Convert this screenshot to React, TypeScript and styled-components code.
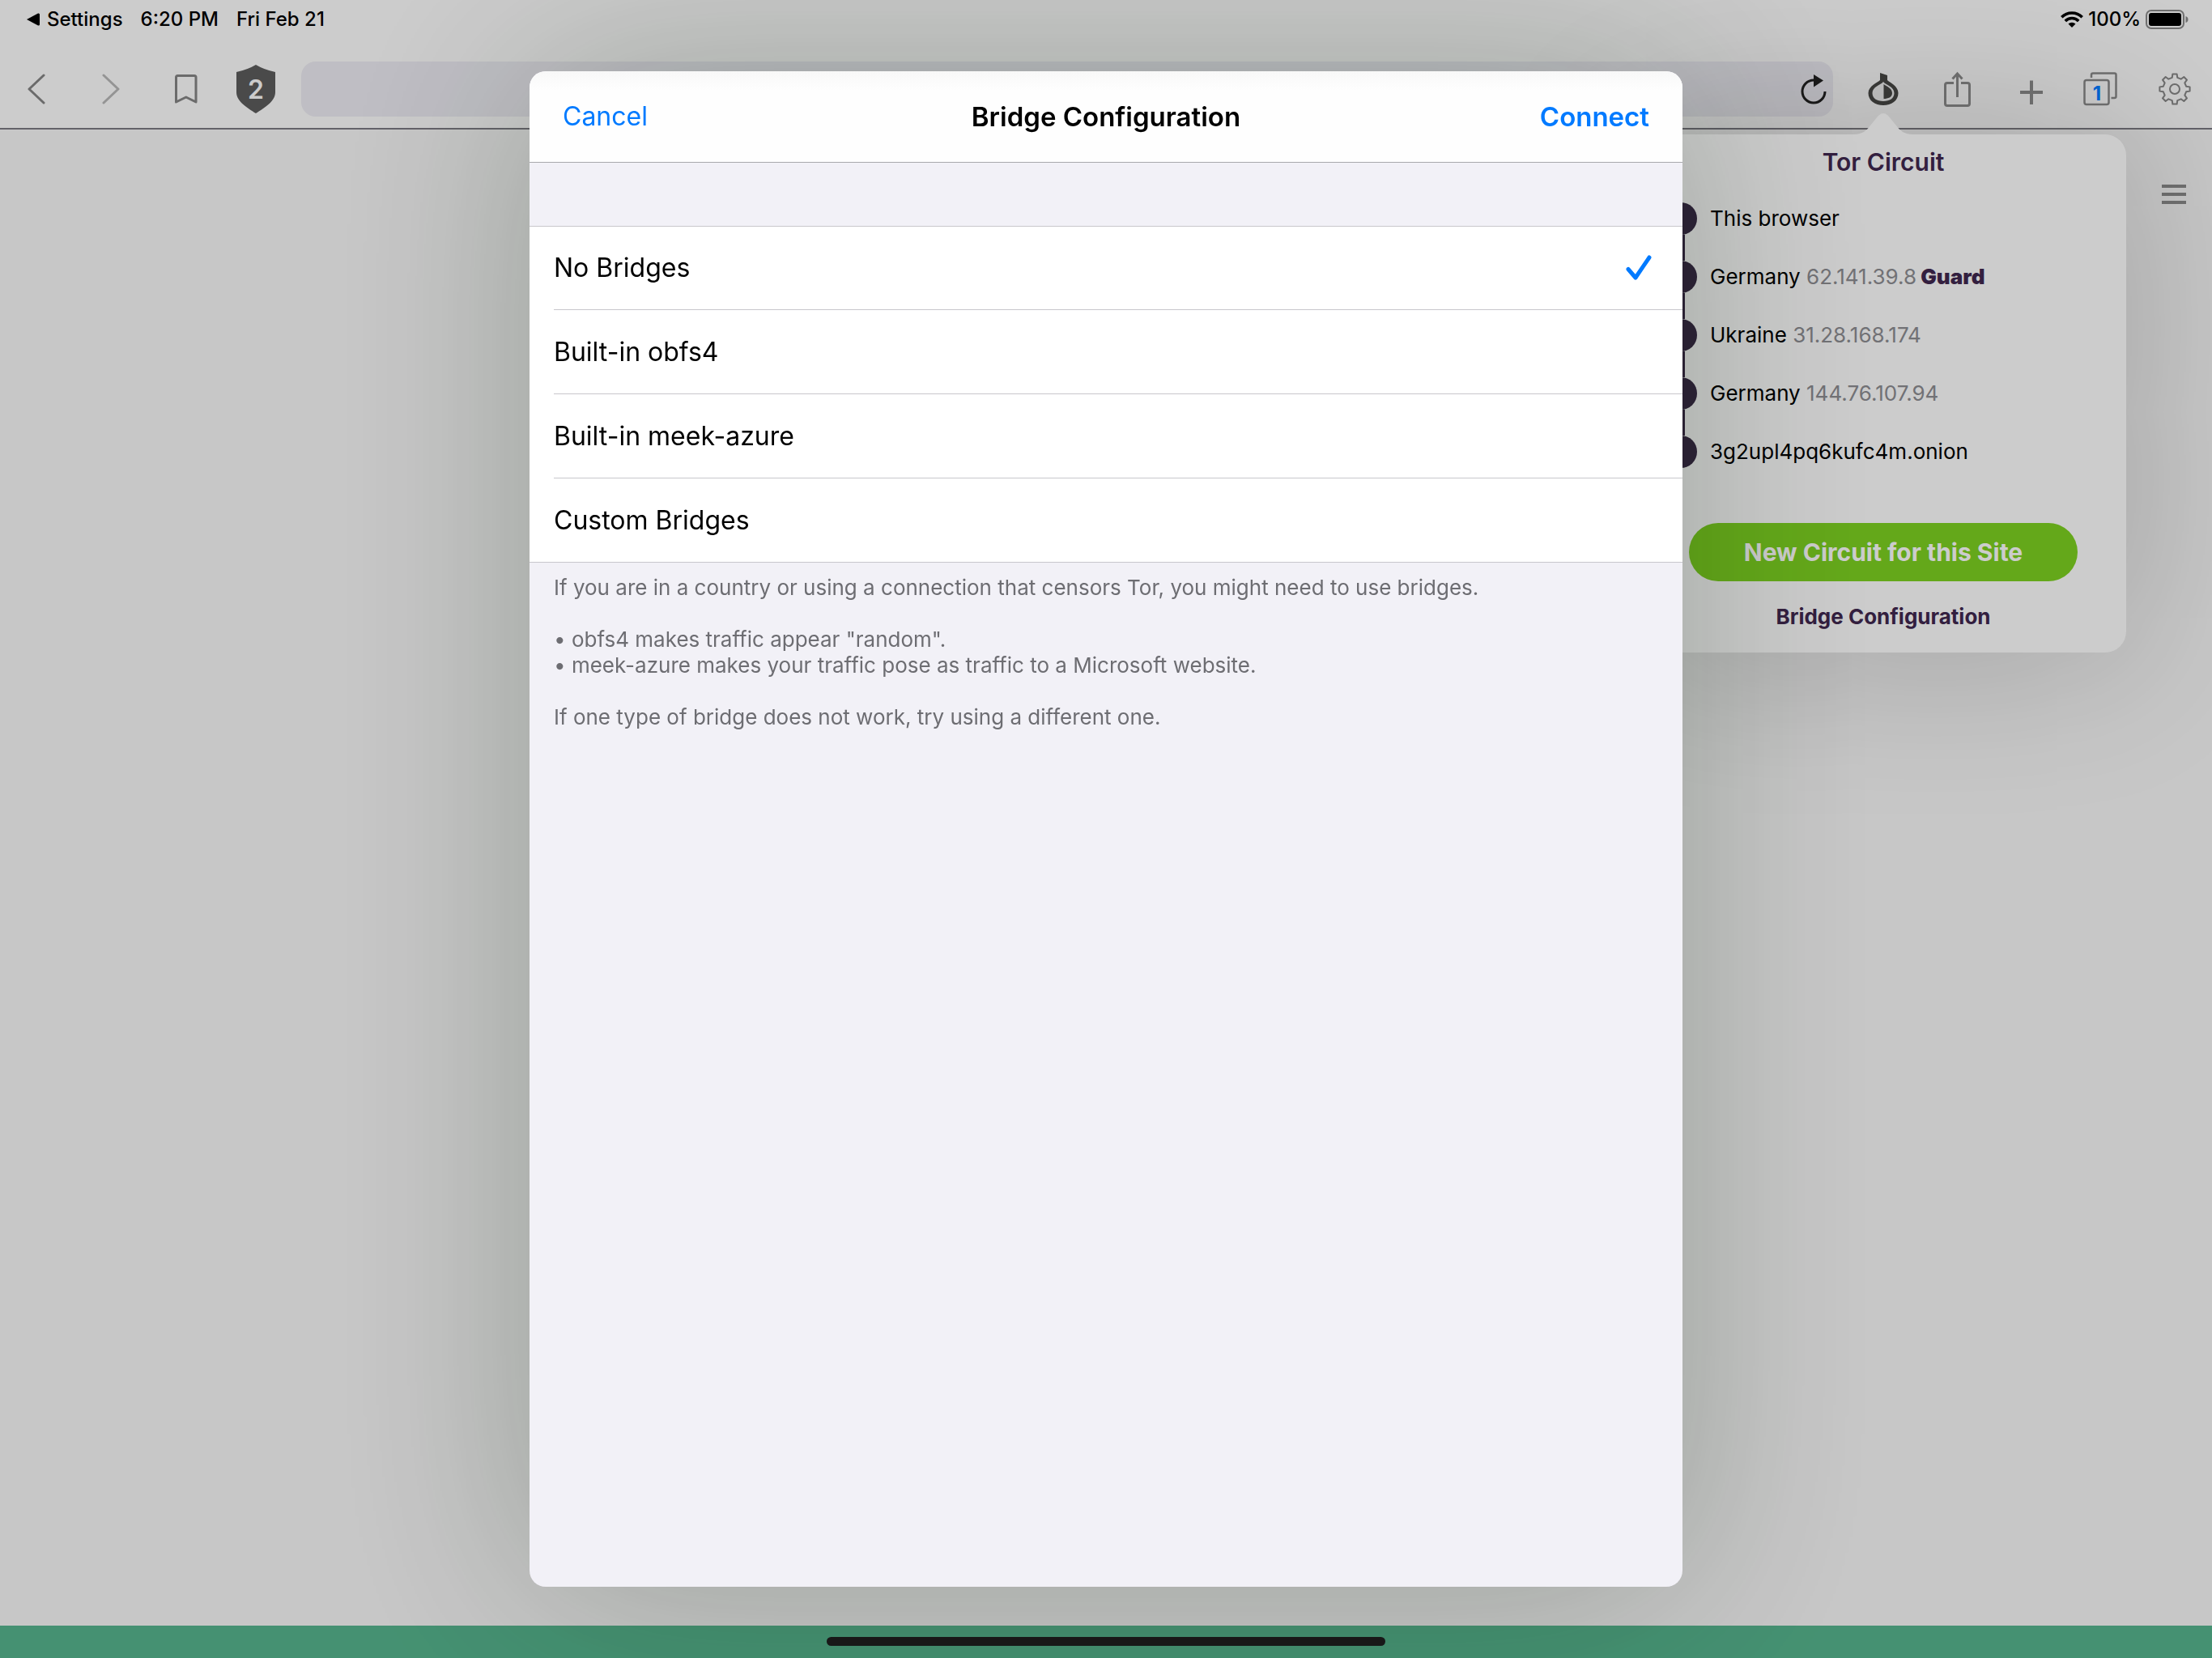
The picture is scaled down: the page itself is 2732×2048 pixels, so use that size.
import React, { useState } from "react";
import styled, { createGlobalStyle } from "styled-components";

const GlobalStyle = createGlobalStyle`
  *, *::before, *::after { box-sizing: border-box; }
  body {
    margin: 0;
    font-family: Inter, "Liberation Sans", sans-serif;
    color: #000;
    background: #f9f9f9;
  }
  button, input { font: inherit; }
`;

const Screen = styled.div`
  min-height: 100vh;
  display: flex;
  flex-direction: column;
  position: relative;
  overflow: hidden;
`;

const StatusBar = styled.header`
  height: 48px;
  padding: 0 28px 0 33px;
  display: flex;
  align-items: center;
  justify-content: space-between;
  background: #fff;
  font-size: 24px;
  line-height: 30px;
  font-weight: 500;
`;

const StatusGroup = styled.div<{ $gap: number }>`
  display: flex;
  align-items: center;
  gap: ${(p) => p.$gap}px;
`;

const BackToApp = styled.a`
  display: flex;
  align-items: center;
  gap: 9px;
  color: inherit;
  text-decoration: none;
`;

const Toolbar = styled.nav`
  display: flex;
  align-items: center;
  gap: 22px;
  padding: 28px 6px 14px;
  background: #fff;
  border-bottom: 2px solid #7d7c84;
  position: relative;
  z-index: 1;
`;

const ToolGroup = styled.div<{ $gap: number }>`
  display: flex;
  align-items: center;
  gap: ${(p) => p.$gap}px;
`;

const ToolButton = styled.button<{ $width?: number }>`
  width: ${(p) => p.$width ?? 80}px;
  height: 68px;
  padding: 0;
  border: 0;
  background: none;
  color: #868686;
  display: flex;
  align-items: center;
  justify-content: center;
  position: relative;
`;

const ShieldCount = styled.span`
  position: absolute;
  inset: 0;
  display: flex;
  align-items: center;
  justify-content: center;
  color: #fff;
  font-size: 32px;
  font-weight: 600;
`;

const TabCount = styled.span`
  position: absolute;
  inset: 10px 12px 0 0;
  display: flex;
  align-items: center;
  justify-content: center;
  color: #007aff;
  font-size: 24px;
  font-weight: 700;
`;

const AddressField = styled.div`
  flex: 1;
  height: 68px;
  display: flex;
  align-items: center;
  border-radius: 18px;
  background: #efeef5;
`;

const AddressInput = styled.input`
  flex: 1;
  min-width: 0;
  height: 100%;
  padding: 0 24px;
  border: 0;
  outline: 0;
  background: none;
  font-size: 32px;
`;

const Anchor = styled.div`
  position: relative;
`;

const Popover = styled.section`
  position: absolute;
  top: 90px;
  left: 50%;
  width: 600px;
  margin-left: -300px;
  padding: 14px 30px 22px;
  border-radius: 26px;
  background: #fff;
  box-shadow: 0 0 200px rgba(0, 0, 0, 0.22);
`;

const PopoverArrow = styled.svg`
  position: absolute;
  top: -26px;
  left: 50%;
  margin-left: -36px;
  display: block;
`;

const PopoverTitle = styled.h2`
  margin: 0 0 30px;
  text-align: center;
  color: #40274f;
  font-size: 30px;
  line-height: 40px;
  font-weight: 600;
`;

const Hops = styled.ol`
  list-style: none;
  margin: 0;
  padding: 0;
  display: flex;
  flex-direction: column;
  gap: 32px;
`;

const Hop = styled.li`
  display: flex;
  align-items: center;
  gap: 16px;
  font-size: 26px;
  line-height: 40px;
  white-space: pre;
`;

const HopDot = styled.span<{ $last: boolean }>`
  flex: none;
  width: 40px;
  height: 40px;
  border-radius: 50%;
  background: #3a2a47;
  position: relative;
  &::after {
    content: "";
    display: ${(p) => (p.$last ? "none" : "block")};
    position: absolute;
    top: 100%;
    left: 15px;
    width: 10px;
    height: 32px;
    background: #3a2a47;
  }
`;

const HopAddress = styled.span`
  color: #8e8e93;
`;

const HopRole = styled.strong`
  color: #40274f;
  font-weight: 900;
`;

const NewCircuit = styled.button`
  display: block;
  width: 480px;
  height: 72px;
  margin: 68px auto 22px;
  padding: 0;
  border: 0;
  border-radius: 36px;
  background: #7ed321;
  color: #fff;
  font-size: 30px;
  font-weight: 700;
`;

const PopoverLink = styled.button`
  display: block;
  margin: 0 auto;
  padding: 0;
  border: 0;
  background: none;
  color: #40274f;
  font-size: 26px;
  line-height: 44px;
  font-weight: 700;
`;

const WebContent = styled.main`
  flex: 1;
  padding: 57px 24px;
  display: flex;
  justify-content: flex-end;
  align-items: flex-start;
  background: #f9f9f9;
`;

const MenuButton = styled.button`
  width: 46px;
  height: 46px;
  padding: 0;
  border: 0;
  background: none;
  color: #8c8c8c;
  display: flex;
  align-items: center;
  justify-content: center;
`;

const PageFooter = styled.footer`
  height: 40px;
  background: #57b68f;
`;

const Dim = styled.div`
  position: fixed;
  inset: 0;
  z-index: 2;
  display: flex;
  align-items: center;
  justify-content: center;
  padding: 88px 24px;
  background: rgba(0, 0, 0, 0.2);
`;

const Sheet = styled.form`
  width: 100%;
  max-width: 1424px;
  height: 100%;
  display: flex;
  flex-direction: column;
  border-radius: 20px;
  overflow: hidden;
  background: #f2f1f7;
  box-shadow: 0 0 260px rgba(10, 30, 0, 0.24);
`;

const SheetHeader = styled.div`
  display: grid;
  grid-template-columns: 1fr auto 1fr;
  align-items: center;
  height: 113px;
  padding: 0 41px;
  background: linear-gradient(#f8f8f8, #fefefe 24px);
  border-bottom: 1px solid #a9a9ad;
`;

const SheetTitle = styled.h1`
  margin: 0;
  font-size: 33px;
  line-height: 44px;
  font-weight: 600;
`;

const SheetAction = styled.button<{ $primary?: boolean }>`
  justify-self: ${(p) => (p.$primary ? "end" : "start")};
  padding: 0;
  border: 0;
  background: none;
  color: #007aff;
  font-size: ${(p) => (p.$primary ? 33 : 32)}px;
  line-height: 44px;
  font-weight: ${(p) => (p.$primary ? 600 : 400)};
`;

const Options = styled.fieldset`
  min-width: 0;
  margin: 78px 0 0;
  padding: 0 0 0 30px;
  border: 0;
  border-top: 1px solid #c8c7cc;
  border-bottom: 1px solid #c8c7cc;
  background: #fff;
`;

const Option = styled.label`
  display: flex;
  align-items: center;
  justify-content: space-between;
  height: 104px;
  padding-right: 38px;
  font-size: 32px;
  line-height: 44px;
  position: relative;
  &:first-of-type { height: 103px; }
  &:last-of-type { height: 103px; }
  &:not(:last-of-type) { border-bottom: 1px solid #c8c7cc; }
`;

const HiddenRadio = styled.input`
  position: absolute;
  inset: 0;
  width: 100%;
  height: 100%;
  margin: 0;
  opacity: 0;
`;

const Help = styled.div`
  padding: 15px 30px;
  color: #6d6d72;
  font-size: 26px;
  line-height: 32px;
`;

const HelpText = styled.p`
  margin: 0 0 32px;
`;

const HelpList = styled.ul`
  list-style: none;
  margin: 0 0 32px;
  padding: 0;
`;

const HomeIndicator = styled.div`
  position: fixed;
  left: 50%;
  bottom: 15px;
  z-index: 3;
  width: 690px;
  max-width: 60%;
  height: 11px;
  border-radius: 6px;
  background: #181818;
  transform: translateX(-50%);
`;

const hops = [
  { name: "This browser" },
  { name: "Germany", address: "62.141.39.8", role: "Guard" },
  { name: "Ukraine", address: "31.28.168.174" },
  { name: "Germany", address: "144.76.107.94" },
  { name: "3g2upl4pq6kufc4m.onion" },
];

const bridges = ["No Bridges", "Built-in obfs4", "Built-in meek-azure", "Custom Bridges"];

const gearPath = (() => {
  const points: string[] = [];
  const profile: [number, number][] = [
    [-13, 14.5],
    [-8, 18.8],
    [8, 18.8],
    [13, 14.5],
  ];
  for (let tooth = 0; tooth < 8; tooth++) {
    profile.forEach(([offset, radius]) => {
      const angle = ((tooth * 45 + offset - 90) * Math.PI) / 180;
      points.push(`${(24 + radius * Math.cos(angle)).toFixed(2)} ${(24 + radius * Math.sin(angle)).toFixed(2)}`);
    });
  }
  return `M${points.join("L")}Z`;
})();

const ChevronIcon = ({ forward }: { forward?: boolean }) => (
  <svg width="24" height="40" viewBox="0 0 24 40" fill="none" stroke={forward ? "#bababa" : "#868686"} strokeWidth="3" strokeLinecap="round" strokeLinejoin="round">
    <path d={forward ? "M2 3L20 20L2 37" : "M20 3L2 20L20 37"} />
  </svg>
);

const BookmarkIcon = () => (
  <svg width="32" height="40" viewBox="0 0 32 40" fill="none" stroke="currentColor" strokeWidth="3" strokeLinejoin="round">
    <path d="M3.500 36V5.500Q3.500 3.500 5.500 3.500H26Q28 3.500 28 5.500V36L15.800 30Z" />
  </svg>
);

const ShieldIcon = () => (
  <svg width="48" height="60" viewBox="0 0 48 60" fill="#5d5d5d">
    <path d="M24 0Q34 6 48 9V34C48 45 35 53 24 60C13 53 0 45 0 34V9Q14 6 24 0Z" />
  </svg>
);

const ReloadIcon = () => (
  <svg width="40" height="44" viewBox="0 0 40 44">
    <path d="M34 25A14 14 0 1 1 20 11" fill="none" stroke="#222" strokeWidth="3" />
    <path d="M20 4V19.500L32 11.500Z" fill="#222" />
  </svg>
);

const OnionIcon = () => (
  <svg width="40" height="44" viewBox="0 0 40 44">
    <path d="M16 2L25 5V11C28 14 38.500 18 38.500 27C38.500 36.500 30 42 20 42S1.500 36.500 1.500 27C1.500 18 13 14 16 11Z" fill="#494947" />
    <path d="M20 13C17 17 6.500 19 6.500 27C6.500 33.500 12 37 20 37S33.500 33.500 33.500 27C33.500 19 23 17 20 13Z" fill="#f4f4f4" />
    <path d="M20.500 16C24 18.500 31 21 31 27C31 32 26 34 20.500 34Z" fill="#494947" />
  </svg>
);

const ShareIcon = () => (
  <svg width="40" height="48" viewBox="0 0 40 48" fill="none" stroke="currentColor" strokeWidth="3">
    <path d="M17 16.500H9Q6.500 16.500 6.500 19V42Q6.500 44.500 9 44.500H34Q36.500 44.500 36.500 42V19Q36.500 16.500 34 16.500H26" />
    <path d="M21.500 34V5M15.500 11.500L21.500 5L27.500 11.500" />
  </svg>
);

const PlusIcon = () => (
  <svg width="40" height="40" viewBox="0 0 40 40" fill="none" stroke="currentColor" strokeWidth="4">
    <path d="M23 9.500V39M9 24H37" />
  </svg>
);

const TabsIcon = () => (
  <svg width="46" height="44" viewBox="0 0 46 44" fill="none" stroke="currentColor" strokeWidth="2.500">
    <rect x="1.500" y="11" width="30" height="30" rx="2.500" />
    <path d="M10 8V4.500Q10 2.500 12 2.500H38.500Q40.500 2.500 40.500 4.500V31Q40.500 33 38.500 33H34.500" />
  </svg>
);

const GearIcon = () => (
  <svg width="48" height="48" viewBox="0 0 48 48" fill="none" stroke="currentColor" strokeWidth="2" strokeLinejoin="round">
    <path d={gearPath} />
    <circle cx="24" cy="24" r="6" />
  </svg>
);

const MenuIcon = () => (
  <svg width="30" height="24" viewBox="0 0 30 24" stroke="currentColor" strokeWidth="4">
    <path d="M0 2H30M0 12H30M0 22H30" />
  </svg>
);

const WifiIcon = () => (
  <svg width="28" height="20" viewBox="0 0 28 20" fill="none" stroke="#000" strokeWidth="3.600">
    <path d="M1.300 7.300A18 18 0 0 1 26.700 7.300" />
    <path d="M5.800 12A11.500 11.500 0 0 1 22.200 12" />
    <path d="M14 20L9.500 15.500A6.400 6.400 0 0 1 18.500 15.500Z" fill="#000" stroke="none" />
  </svg>
);

const BatteryIcon = () => (
  <svg width="54" height="24" viewBox="0 0 54 24">
    <rect x="1" y="1" width="46" height="22" rx="6" fill="none" stroke="#8c8c8c" strokeWidth="2" />
    <rect x="4" y="4" width="40" height="16" rx="3" fill="#000" />
    <path d="M49.500 8Q52.500 9 52.500 12T49.500 16Z" fill="#8c8c8c" />
  </svg>
);

const CheckIcon = () => (
  <svg width="32" height="32" viewBox="0 0 32 32" fill="none" stroke="#007aff" strokeWidth="5" strokeLinecap="round" strokeLinejoin="round">
    <path d="M3 17.500L12 28L29 3" />
  </svg>
);

export default function App() {
  const [bridge, setBridge] = useState(bridges[0]);

  return (
    <>
      <GlobalStyle />
      <Screen>
        <StatusBar>
          <StatusGroup $gap={22}>
            <BackToApp href="#settings">
              <svg width="16" height="16" viewBox="0 0 16 16">
                <path d="M0 8L14 0.500Q16 0 16 2V14Q16 16 14 15.500Z" />
              </svg>
              Settings
            </BackToApp>
            <span>6:20 PM</span>
            <span>Fri Feb 21</span>
          </StatusGroup>
          <StatusGroup $gap={6}>
            <WifiIcon />
            <span>100%</span>
            <BatteryIcon />
          </StatusGroup>
        </StatusBar>

        <Toolbar aria-label="Browser">
          <ToolGroup $gap={12}>
            <ToolButton aria-label="Back"><ChevronIcon /></ToolButton>
            <ToolButton aria-label="Forward"><ChevronIcon forward /></ToolButton>
            <ToolButton aria-label="Bookmarks"><BookmarkIcon /></ToolButton>
            <ToolButton aria-label="Security level" $width={68}>
              <ShieldIcon />
              <ShieldCount>2</ShieldCount>
            </ToolButton>
          </ToolGroup>
          <AddressField>
            <AddressInput type="text" aria-label="Address" />
            <ToolButton aria-label="Reload" $width={48}><ReloadIcon /></ToolButton>
          </AddressField>
          <ToolGroup $gap={10}>
            <Anchor>
              <ToolButton aria-label="Circuit"><OnionIcon /></ToolButton>
              <Popover>
                <PopoverArrow width="72" height="27" viewBox="0 0 72 27" fill="#fff">
                  <path d="M0 27V26C9 26 15 22 20 15L29 4Q36 -4 43 4L52 15C57 22 63 26 72 26V27Z" />
                </PopoverArrow>
                <PopoverTitle>Tor Circuit</PopoverTitle>
                <Hops>
                  {hops.map((hop, i) => (
                    <Hop key={i}>
                      <HopDot $last={i === hops.length - 1} />
                      <span>
                        {hop.name}
                        {hop.address && <HopAddress> {hop.address}</HopAddress>}
                        {hop.role && <HopRole> {hop.role}</HopRole>}
                      </span>
                    </Hop>
                  ))}
                </Hops>
                <NewCircuit>New Circuit for this Site</NewCircuit>
                <PopoverLink>Bridge Configuration</PopoverLink>
              </Popover>
            </Anchor>
            <ToolButton aria-label="Share"><ShareIcon /></ToolButton>
            <ToolButton aria-label="New tab"><PlusIcon /></ToolButton>
            <ToolButton aria-label="Tabs">
              <TabsIcon />
              <TabCount>1</TabCount>
            </ToolButton>
            <ToolButton aria-label="Settings"><GearIcon /></ToolButton>
          </ToolGroup>
        </Toolbar>

        <WebContent>
          <MenuButton aria-label="Menu"><MenuIcon /></MenuButton>
        </WebContent>
        <PageFooter />

        <Dim>
          <Sheet role="dialog" aria-labelledby="sheet-title" onSubmit={(e) => e.preventDefault()}>
            <SheetHeader>
              <SheetAction type="button">Cancel</SheetAction>
              <SheetTitle id="sheet-title">Bridge Configuration</SheetTitle>
              <SheetAction type="submit" $primary>Connect</SheetAction>
            </SheetHeader>
            <Options aria-labelledby="sheet-title">
              {bridges.map((name) => (
                <Option key={name}>
                  <HiddenRadio type="radio" name="bridge" checked={bridge === name} onChange={() => setBridge(name)} />
                  <span>{name}</span>
                  {bridge === name && <CheckIcon />}
                </Option>
              ))}
            </Options>
            <Help>
              <HelpText>
                If you are in a country or using a connection that censors Tor, you might need to use bridges.
              </HelpText>
              <HelpList>
                <li>• obfs4 makes traffic appear "random".</li>
                <li>• meek-azure makes your traffic pose as traffic to a Microsoft website.</li>
              </HelpList>
              <HelpText>If one type of bridge does not work, try using a different one.</HelpText>
            </Help>
          </Sheet>
        </Dim>
        <HomeIndicator />
      </Screen>
    </>
  );
}
